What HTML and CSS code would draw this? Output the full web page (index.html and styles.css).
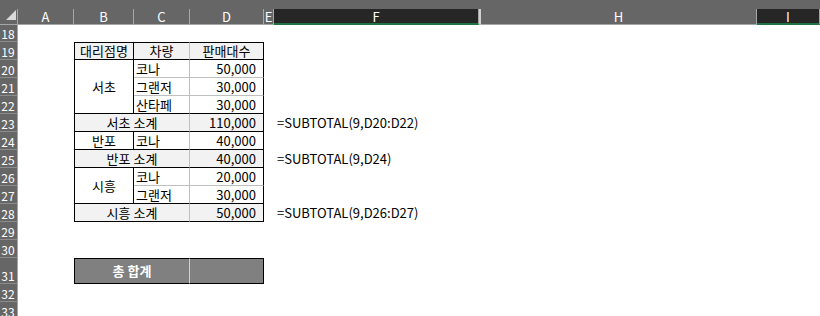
FILE: index.html
```html
<html>
<head>
    <link rel="stylesheet" href="styles.css">
</head>
<body>
<div class="sheet">
    <div class="topbar"></div>

    <div class="corner"><svg width="17" height="15"><polygon points="16,1 16,11 6,11" fill="#d9d9d9"/></svg></div>
    <div class="colhead">A</div>
    <div class="colhead">B</div>
    <div class="colhead">C</div>
    <div class="colhead">D</div>
    <div class="colhead">E</div>
    <div class="colhead selected">F</div>
    <div class="colhead hidden"></div>
    <div class="colhead">H</div>
    <div class="colhead selected">I</div>

    <div class="rowheads">
        <div class="rh short">18</div>
        <div class="rh">19</div>
        <div class="rh">20</div>
        <div class="rh">21</div>
        <div class="rh">22</div>
        <div class="rh">23</div>
        <div class="rh">24</div>
        <div class="rh">25</div>
        <div class="rh">26</div>
        <div class="rh">27</div>
        <div class="rh">28</div>
        <div class="rh">29</div>
        <div class="rh">30</div>
        <div class="rh tall">31</div>
        <div class="rh">32</div>
        <div class="rh">33</div>
    </div>

    <!-- 표 머리 -->
    <div class="cell col-b row-19 head center">대리점명</div>
    <div class="cell col-c row-19 head center">차량</div>
    <div class="cell col-d row-19 head center">판매대수</div>

    <!-- 서초 -->
    <div class="cell col-b row-20-22 center">서초</div>
    <div class="cell col-c row-20 thin">코나</div>
    <div class="cell col-d row-20 thin num">50,000</div>
    <div class="cell col-c row-21 thin">그랜저</div>
    <div class="cell col-d row-21 thin num">30,000</div>
    <div class="cell col-c row-22">산타페</div>
    <div class="cell col-d row-22 num">30,000</div>
    <div class="cell col-bc row-23 sub center">서초 소계</div>
    <div class="cell col-d row-23 sub num">110,000</div>
    <div class="formula col-f row-23">=SUBTOTAL(9,D20:D22)</div>

    <!-- 반포 -->
    <div class="cell col-b row-24 center">반포</div>
    <div class="cell col-c row-24">코나</div>
    <div class="cell col-d row-24 num">40,000</div>
    <div class="cell col-bc row-25 sub center">반포 소계</div>
    <div class="cell col-d row-25 sub num">40,000</div>
    <div class="formula col-f row-25">=SUBTOTAL(9,D24)</div>

    <!-- 시흥 -->
    <div class="cell col-b row-26-27 center">시흥</div>
    <div class="cell col-c row-26 thin">코나</div>
    <div class="cell col-d row-26 thin num">20,000</div>
    <div class="cell col-c row-27">그랜저</div>
    <div class="cell col-d row-27 num">30,000</div>
    <div class="cell col-bc row-28 sub center">시흥 소계</div>
    <div class="cell col-d row-28 sub num">50,000</div>
    <div class="formula col-f row-28">=SUBTOTAL(9,D26:D27)</div>

    <!-- 총 합계 -->
    <div class="cell col-bc row-31 total center">총 합계</div>
    <div class="cell col-d row-31 total"></div>
</div>
</body>
</html>
```

FILE: styles.css
```css
body {
    margin: 0;
    background: #fff;
    font-family: "Noto Sans CJK KR", "Noto Sans", sans-serif;
    overflow: hidden;
}

.sheet {
    display: grid;
    grid-template-columns: 18px 56px 60px 56px 74px 10px 205px 2px 276px 63px;
    grid-template-rows: 9px 16px 17px repeat(12, 18px) 26px 18px 18px;
    width: 820px;
    height: 316px;
    overflow: hidden;
}

/* 머리글 */
.topbar {
    grid-column: 1 / -1;
    grid-row: 1;
    background: #666;
}

.corner, .colhead {
    background: #666;
    border-right: 1px solid #a6a6a6;
    border-bottom: 1px solid #a6a6a6;
    box-sizing: border-box;
}

.corner svg {
    display: block;
}

.colhead {
    color: #fff;
    font-size: 13px;
    line-height: 15px;
    text-align: center;
}

.colhead.selected {
    background: #262626;
    border-bottom: 2px solid #217346;
}

.colhead.hidden {
    border-left: 1px solid #d0d0d0;
    border-right: 1px solid #d0d0d0;
}

.rowheads {
    grid-column: 1;
    grid-row: 3 / -1;
    display: flex;
    flex-direction: column;
}

.rh {
    height: 18px;
    flex: none;
    box-sizing: border-box;
    background: #666;
    color: #fff;
    border-right: 1px solid #a6a6a6;
    border-bottom: 1px solid #8c8c8c;
    font-size: 12px;
    line-height: 15px;
    display: flex;
    align-items: flex-end;
    justify-content: center;
    padding-right: 1px;
}

.rh.short { height: 17px; }
.rh.tall { height: 26px; }

/* 셀 */
.cell {
    box-sizing: border-box;
    border-right: 1px solid #bfbfbf;
    border-bottom: 1px solid #000;
    font-size: 13px;
    line-height: 16px;
    color: #000;
    display: flex;
    align-items: center;
    padding: 0 2px;
    white-space: nowrap;
}

.cell.center { justify-content: center; }
.cell.num { justify-content: flex-end; padding-right: 7px; }
.cell.thin { border-bottom-color: #bfbfbf; }
.cell.head { background: #f2f2f2; border-top: 1px solid #000; }
.cell.sub { background: #f2f2f2; }

.cell.total {
    background: #808080;
    color: #fff;
    font-weight: bold;
    border-top: 1px solid #000;
    border-right-color: #d0d0d0;
}

.col-b {
    grid-column: 3;
    border-left: 1px solid #000;
    border-right-color: #000;
}
.col-bc { grid-column: 3 / 5; border-left: 1px solid #000; }
.col-c { grid-column: 4; }
.col-d, .cell.total.col-d { grid-column: 5; border-right-color: #000; }
.col-f { grid-column: 7; }

.row-19 { grid-row: 4; }
.row-20 { grid-row: 5; }
.row-21 { grid-row: 6; }
.row-22 { grid-row: 7; }
.row-23 { grid-row: 8; }
.row-24 { grid-row: 9; }
.row-25 { grid-row: 10; }
.row-26 { grid-row: 11; }
.row-27 { grid-row: 12; }
.row-28 { grid-row: 13; }
.row-31 { grid-row: 16; }
.row-20-22 { grid-row: 5 / 8; }
.row-26-27 { grid-row: 11 / 13; }

.formula {
    font-size: 13px;
    line-height: 16px;
    padding-left: 3px;
    display: flex;
    align-items: center;
    white-space: nowrap;
}
```
